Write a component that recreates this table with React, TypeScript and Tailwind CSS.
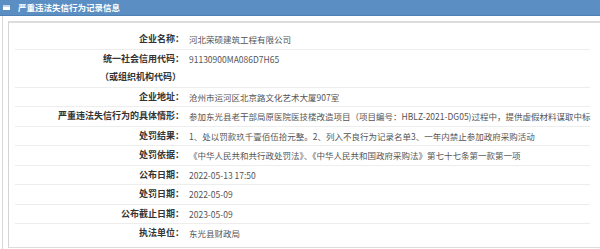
import React from 'react';

interface Row {
  label: string[];
  value: string;
}

const rows: Row[] = [
  { label: ['企业名称：'], value: '河北荣硕建筑工程有限公司' },
  { label: ['统一社会信用代码：', '（或组织机构代码）'], value: '91130900MA086D7H65' },
  { label: ['企业地址：'], value: '沧州市运河区北京路文化艺术大厦907室' },
  {
    label: ['严重违法失信行为的具体情形：'],
    value: '参加东光县老干部局原医院医技楼改造项目（项目编号：HBLZ-2021-DG05)过程中，提供虚假材料谋取中标',
  },
  { label: ['处罚结果：'], value: '1、处以罚款玖千壹佰伍拾元整。2、列入不良行为记录名单3、一年内禁止参加政府采购活动' },
  { label: ['处罚依据：'], value: '《中华人民共和共行政处罚法》、《中华人民共和国政府采购法》第七十七条第一款第一项' },
  { label: ['公布日期：'], value: '2022-05-13 17:50' },
  { label: ['处罚日期：'], value: '2022-05-09' },
  { label: ['公布截止日期：'], value: '2023-05-09' },
  { label: ['执法单位：'], value: '东光县财政局' },
];

const App: React.FC = () => {
  return (
    <div
      className="w-[600px] h-[249px] overflow-hidden bg-white"
      style={{ fontFamily: '"Noto Sans CJK SC", "Noto Sans", sans-serif' }}
    >
      {/* title bar */}
      <div className="h-[16px] bg-[#5b8fc4] border-b border-[#4d80b5] flex items-center pl-[3px]">
        <div className="w-[7px] h-[5px] bg-white border-t-2 border-[#c9d6e4] mr-[8px]" />
        <span className="text-[8.5px] font-bold text-white leading-none">严重违法失信行为记录信息</span>
      </div>

      <div className="border-l border-[#d6d6d6] ml-[2px] pl-[5px] pt-[5px] h-[233px]">
        <div className="border-t-2 border-l border-b border-[#dcdcdc] border-l-[#d4d4d4] pl-[6px] pr-[10px] pt-[7px] pb-[4px]">
          {rows.map((row, i) => (
            <div key={i} className="flex border-b border-[#ededed] last:border-b-0">
              <div className="w-[169px] shrink-0 text-right text-[9px] font-bold text-[#333] leading-[18.5px]">
                {row.label.map((l, j) => (
                  <div key={j} className={j > 0 ? 'pr-[3px]' : ''}>{l}</div>
                ))}
              </div>
              <div className="pl-[5px] text-[8.5px] text-[#555] leading-[18.5px] whitespace-nowrap">
                {row.value}
              </div>
            </div>
          ))}
        </div>
      </div>
    </div>
  );
};

export default App;
